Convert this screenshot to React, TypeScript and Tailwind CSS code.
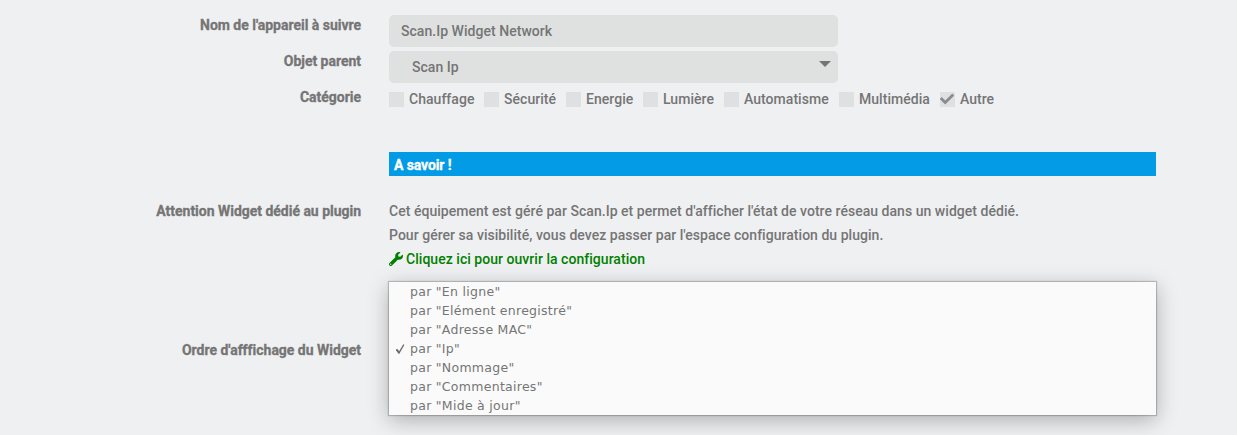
import { FaCheck, FaWrench } from "react-icons/fa";
import type { ReactNode } from "react";

const categories = [
  { name: "Chauffage", width: "w-[95px]" },
  { name: "Sécurité", width: "w-[82px]" },
  { name: "Energie", width: "w-[77px]" },
  { name: "Lumière", width: "w-[81px]" },
  { name: "Automatisme", width: "w-[115px]" },
  { name: "Multimédia", width: "w-[101px]" },
  { name: "Autre", width: "w-[60px]", checked: true },
];

const orders = ["En ligne", "Elément enregistré", "Adresse MAC", "Ip", "Nommage", "Commentaires", "Mide à jour"];

function Row({ label, className, labelClass, children }: { label?: string; className: string; labelClass?: string; children: ReactNode }) {
  return (
    <div className={`flex ${className}`}>
      <div className={`w-[361px] shrink-0 text-right font-bold tracking-[-0.02px] [-webkit-text-stroke:0.3px_#757575] ${labelClass ?? ""}`}>{label}</div>
      <div className="ml-7 w-[767px]">{children}</div>
    </div>
  );
}

export default function App() {
  return (
    <div className="h-[435px] w-[1237px] overflow-hidden bg-[#eff0f2] pt-[15px] font-['Roboto',sans-serif] text-sm leading-5 font-medium tracking-[0.035px] text-[#757575]">
      <Row label="Nom de l'appareil à suivre" className="h-9">
        <div className="flex h-8 w-[449px] items-center rounded-[5px] bg-[#dfe1e0] pl-3">Scan.Ip Widget Network</div>
      </Row>
      <Row label="Objet parent" className="h-9">
        <div className="flex h-8 w-[449px] items-center justify-between rounded-[5px] bg-[#dfe1e0] pr-[7px] pl-[23px]">
          <span>Scan Ip</span>
          <svg className="mb-[6px] h-[6px] w-3" viewBox="0 0 12 6" fill="#757575">
            <path d="M0 0h12L6 6z" />
          </svg>
        </div>
      </Row>
      <Row label="Catégorie" className="h-[65px]">
        <div className="flex pt-[2px]">
          {categories.map((c) => (
            <div key={c.name} className={`flex shrink-0 items-center gap-[5px] ${c.width}`}>
              <span className="flex size-[15px] shrink-0 items-center bg-[#dfe1e0]">
                {c.checked && <FaCheck className="size-[14px] text-[#8a8a93]" />}
              </span>
              <span className="whitespace-nowrap">{c.name}</span>
            </div>
          ))}
        </div>
      </Row>
      <Row className="h-[47px]">
        <div className="flex h-6 items-center bg-[#039be5] pt-[2px] pl-[5px] font-bold tracking-[-0.1px] text-white [-webkit-text-stroke:0.3px_white]">
          A savoir !
        </div>
      </Row>
      <Row label="Attention Widget dédié au plugin" className="h-[83px] leading-6">
        <p>Cet équipement est géré par Scan.Ip et permet d'afficher l'état de votre réseau dans un widget dédié.</p>
        <p>Pour gérer sa visibilité, vous devez passer par l'espace configuration du plugin.</p>
        <p className="flex items-center gap-[3px] text-[#008000]">
          <FaWrench className="size-[14px]" />
          <span>Cliquez ici pour ouvrir la configuration</span>
        </p>
      </Row>
      <Row label="Ordre d'afffichage du Widget" className="h-[133px]" labelClass="pt-[58px]">
        <ul className="bg-[#fafafa] font-['DejaVu_Sans',sans-serif] text-[12.5px] leading-[19px] font-normal tracking-[0.28px] shadow-[0_0_1px_1px_rgba(0,0,0,0.2),0_5px_20px_rgba(0,0,0,0.28)]">
          {orders.map((o) => (
            <li key={o} className="flex h-[19px] items-center pl-[5px]">
              <span className="w-4 pl-[2px]">
                {o === "Ip" && (
                  <svg className="h-[10px] w-[9px]" viewBox="0 0 9 10" fill="none" stroke="#6b6b6b" strokeLinecap="round" strokeLinejoin="round">
                    <path d="M0.9 6L3 8.8L7.6 1" strokeWidth="1.4" />
                    <path d="M1 6L3 8.6" strokeWidth="1.9" />
                  </svg>
                )}
              </span>
              <span>par "{o}"</span>
            </li>
          ))}
        </ul>
      </Row>
    </div>
  );
}
